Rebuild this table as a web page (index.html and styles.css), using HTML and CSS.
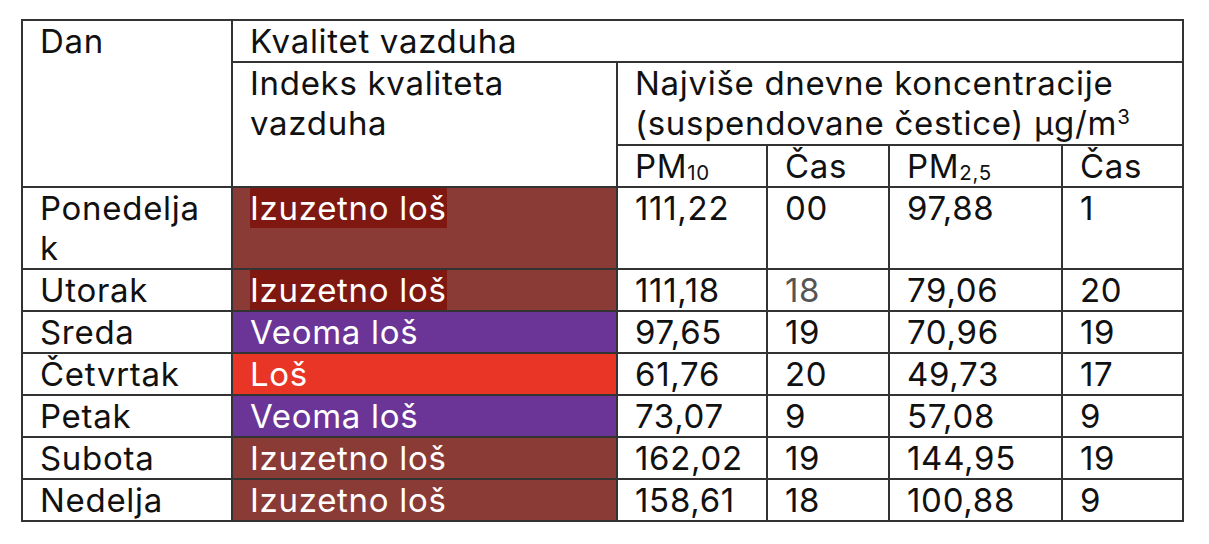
FILE: index.html
```html
<!DOCTYPE html>
<html lang="sr">
<head>
<meta charset="utf-8">
<title>Kvalitet vazduha</title>
<link rel="stylesheet" href="styles.css">
</head>
<body>
<table class="aq">
  <colgroup>
    <col class="c-day">
    <col class="c-idx">
    <col class="c-pm10">
    <col class="c-t1">
    <col class="c-pm25">
    <col class="c-t2">
  </colgroup>
  <thead>
    <tr class="h1">
      <th rowspan="3">Dan</th>
      <th colspan="5">Kvalitet vazduha</th>
    </tr>
    <tr class="h2">
      <th rowspan="2">Indeks kvaliteta vazduha</th>
      <th colspan="4">Najviše dnevne koncentracije (suspendovane čestice) µg/m<sup>3</sup></th>
    </tr>
    <tr class="h3">
      <th>PM<sub>10</sub></th>
      <th>Čas</th>
      <th>PM<sub>2,5</sub></th>
      <th>Čas</th>
    </tr>
  </thead>
  <tbody>
    <tr class="tall">
      <td>Ponedeljak</td>
      <td class="lvl-ext"><span class="hl">Izuzetno loš</span></td>
      <td>111,22</td><td>00</td><td>97,88</td><td>1</td>
    </tr>
    <tr>
      <td>Utorak</td>
      <td class="lvl-ext"><span class="hl">Izuzetno loš</span></td>
      <td>111,18</td><td class="muted">18</td><td>79,06</td><td>20</td>
    </tr>
    <tr>
      <td>Sreda</td>
      <td class="lvl-very">Veoma loš</td>
      <td>97,65</td><td>19</td><td>70,96</td><td>19</td>
    </tr>
    <tr>
      <td>Četvrtak</td>
      <td class="lvl-bad">Loš</td>
      <td>61,76</td><td>20</td><td>49,73</td><td>17</td>
    </tr>
    <tr>
      <td>Petak</td>
      <td class="lvl-very">Veoma loš</td>
      <td>73,07</td><td>9</td><td>57,08</td><td>9</td>
    </tr>
    <tr>
      <td>Subota</td>
      <td class="lvl-ext">Izuzetno loš</td>
      <td>162,02</td><td>19</td><td>144,95</td><td>19</td>
    </tr>
    <tr>
      <td>Nedelja</td>
      <td class="lvl-ext">Izuzetno loš</td>
      <td>158,61</td><td>18</td><td>100,88</td><td>9</td>
    </tr>
  </tbody>
</table>
</body>
</html>
```
FILE: styles.css
```css
html, body {
  margin: 0;
  background: #fff;
}
body {
  padding: 19px 0 0 21px;
  font-family: "Inter", "Noto Sans", sans-serif;
  color: #111;
}
.aq {
  border-collapse: collapse;
  table-layout: fixed;
  width: 1161px;
  font-size: 33px;
  line-height: 40px;
  letter-spacing: 0.7px;
}
.c-day { width: 210px; }
.c-idx { width: 385px; }
.c-pm10 { width: 150px; }
.c-t1 { width: 122px; }
.c-pm25 { width: 173px; }
.c-t2 { width: 121px; }

.aq th, .aq td {
  border: 2px solid #333;
  padding: 0 16px 0 17px;
  text-align: left;
  vertical-align: top;
  font-weight: 400;
  overflow-wrap: anywhere;
}
.h1 { height: 42px; }
.h2 { height: 83px; }
.h3 { height: 41px; }
.aq tbody tr { height: 42px; }
.aq tbody tr.tall { height: 82px; }

.aq sub {
  font-size: 0.62em;
  vertical-align: -0.12em;
  line-height: 0;
}
.aq sup {
  font-size: 0.62em;
  vertical-align: 0.55em;
  line-height: 0;
}

.lvl-ext { background: #8b3b36; color: #fff; }
.lvl-very { background: #6a3597; color: #fff; }
.lvl-bad { background: #e83525; color: #fff; }
.hl {
  display: inline-block;
  background: #7e1810;
}
.muted { color: #555; }
```
